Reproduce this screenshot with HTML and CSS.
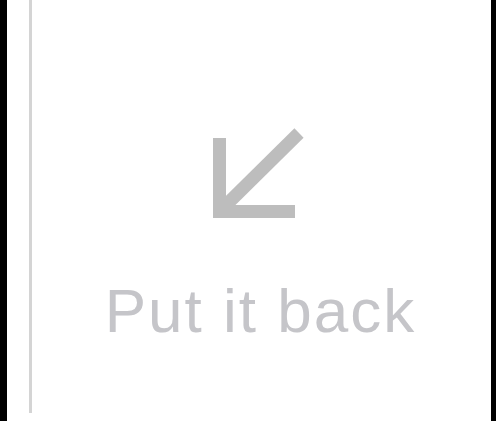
FILE: index.html
```html
<!DOCTYPE html>
<html>
<head>
<meta charset="utf-8">
<link rel="stylesheet" href="styles.css">
</head>
<body>
<div class="frame">
  <div class="rail"></div>
  <div class="content">
    <svg class="arrow" width="100" height="100" viewBox="0 0 100 100">
      <rect x="8" y="13" width="13" height="80" fill="#bdbdbd"/>
      <rect x="8" y="80" width="82" height="13" fill="#bdbdbd"/>
      <line x1="15" y1="86" x2="94" y2="8" stroke="#bdbdbd" stroke-width="13"/>
    </svg>
    <div class="label">Put it back</div>
  </div>
</div>
</body>
</html>
```
FILE: styles.css
```css
html, body {
  margin: 0;
  padding: 0;
  background: #000;
}
.frame {
  display: flex;
  margin-left: 7px;
  width: 484px;
  height: 421px;
  background: #fff;
}
.rail {
  margin-left: 22px;
  width: 3px;
  height: 413px;
  background: #d4d4d4;
}
.content {
  flex: 1;
  display: flex;
  flex-direction: column;
  align-items: center;
  padding-top: 125px;
}
.arrow {
  display: block;
  margin-right: 13px;
}
.label {
  margin-top: 55px;
  margin-right: 2px;
  font-family: "Liberation Sans", Arial, sans-serif;
  font-size: 62px;
  line-height: 62px;
  color: #c5c5c9;
  letter-spacing: 2px;
}
```
